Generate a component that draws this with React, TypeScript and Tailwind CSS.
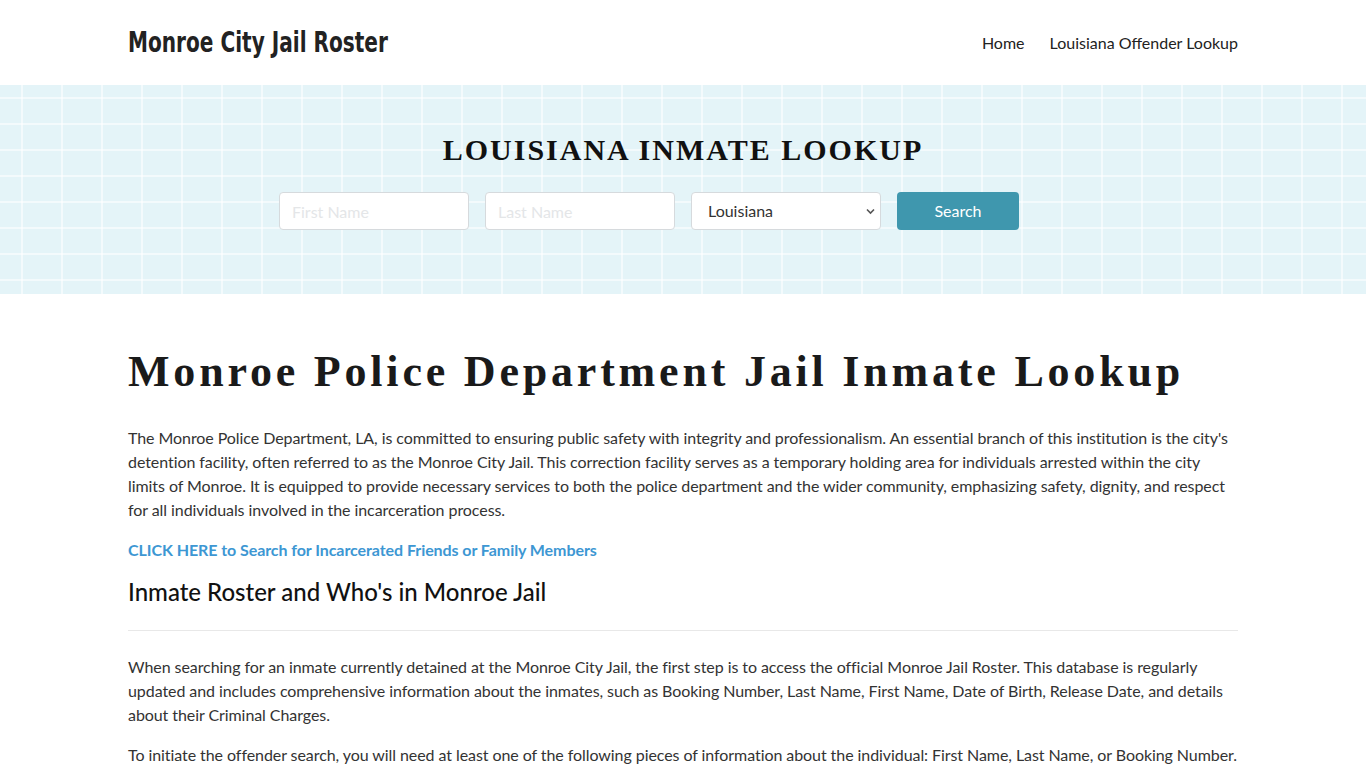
import React from 'react';

const lato = "font-['Lato','Noto_Sans',sans-serif]";

const Header = () => (
  <header className="h-[85px] bg-white">
    <div className="mx-auto flex h-full w-[1110px] items-center justify-between">
      <a className="origin-left scale-x-[0.77] font-['DejaVu_Sans_Condensed',sans-serif] text-[29px] font-bold text-[#222] leading-none">
        Monroe City Jail Roster
      </a>
      <nav className={`${lato} flex items-center gap-[25px] text-[16px] text-[#222]`}>
        <a>Home</a>
        <a>Louisiana Offender Lookup</a>
      </nav>
    </div>
  </header>
);

const Hero = () => (
  <section className="h-[209px] bg-[#e4f4f8] bg-[image:linear-gradient(to_right,rgba(255,255,255,0.55)_2px,transparent_2px),linear-gradient(to_bottom,rgba(255,255,255,0.55)_2px,transparent_2px)] bg-[size:40px_26px] bg-[position:21px_12px]">
    <div className="flex flex-col items-center pt-[50px]">
      <h2 className="font-['Liberation_Serif',serif] text-[30px] font-bold leading-none tracking-[2px] text-[#111]">
        LOUISIANA INMATE LOOKUP
      </h2>
      <form className={`${lato} mt-[27px] mr-[68px] flex gap-[16px]`}>
        <input
          placeholder="First Name"
          className="h-[38px] w-[190px] rounded border border-[#d6dadd] bg-white px-3 text-[16px] text-[#333] placeholder:text-[#e4e6e8] outline-none"
        />
        <input
          placeholder="Last Name"
          className="h-[38px] w-[190px] rounded border border-[#d6dadd] bg-white px-3 text-[16px] text-[#333] placeholder:text-[#e4e6e8] outline-none"
        />
        <div className="relative h-[38px] w-[190px] rounded border border-[#d6dadd] bg-white">
          <div className="flex h-full items-center pl-[16px] text-[16px] text-[#333]">Louisiana</div>
          <svg className="absolute right-[5px] top-[15px]" width="9" height="7" viewBox="0 0 9 7" fill="none">
            <path d="M1 1.5l3.5 3.5 3.5-3.5" stroke="#555" strokeWidth="1.6" />
          </svg>
        </div>
        <button
          type="button"
          className="h-[38px] w-[122px] rounded bg-[#3f97ae] text-[16px] text-white"
        >
          Search
        </button>
      </form>
    </div>
  </section>
);

const Content = () => (
  <main className={`${lato} mx-auto w-[1110px] pt-[54px] text-[16px] leading-[24px] tracking-[-0.07px] text-[#333]`}>
    <h1 className="font-['Liberation_Serif',serif] text-[44px] font-bold leading-[48px] tracking-[3.8px] text-[#1a1a1a]">
      Monroe Police Department Jail Inmate Lookup
    </h1>
    <p className="mt-[30px]">
      The Monroe Police Department, LA, is committed to ensuring public safety with integrity and professionalism. An essential branch of this institution is the city's detention facility, often referred to as the Monroe City Jail. This correction facility serves as a temporary holding area for individuals arrested within the city limits of Monroe. It is equipped to provide necessary services to both the police department and the wider community, emphasizing safety, dignity, and respect for all individuals involved in the incarceration process.
    </p>
    <p className="mt-[16px]">
      <a className="font-bold text-[#3d97d3]">CLICK HERE to Search for Incarcerated Friends or Family Members</a>
    </p>
    <h2 className="mt-[15px] text-[24px] font-medium leading-[30px] tracking-normal text-[#111]">Inmate Roster and Who's in Monroe Jail</h2>
    <hr className="mt-[23px] border-t border-[#e8e8e8]" />
    <p className="mt-[24px]">
      When searching for an inmate currently detained at the Monroe City Jail, the first step is to access the official Monroe Jail Roster. This database is regularly updated and includes comprehensive information about the inmates, such as Booking Number, Last Name, First Name, Date of Birth, Release Date, and details about their Criminal Charges.
    </p>
    <p className="mt-[16px]">
      To initiate the offender search, you will need at least one of the following pieces of information about the individual: First Name, Last Name, or Booking Number.
    </p>
  </main>
);

export default function App() {
  return (
    <div className="min-h-screen bg-white">
      <Header />
      <Hero />
      <Content />
    </div>
  );
}
